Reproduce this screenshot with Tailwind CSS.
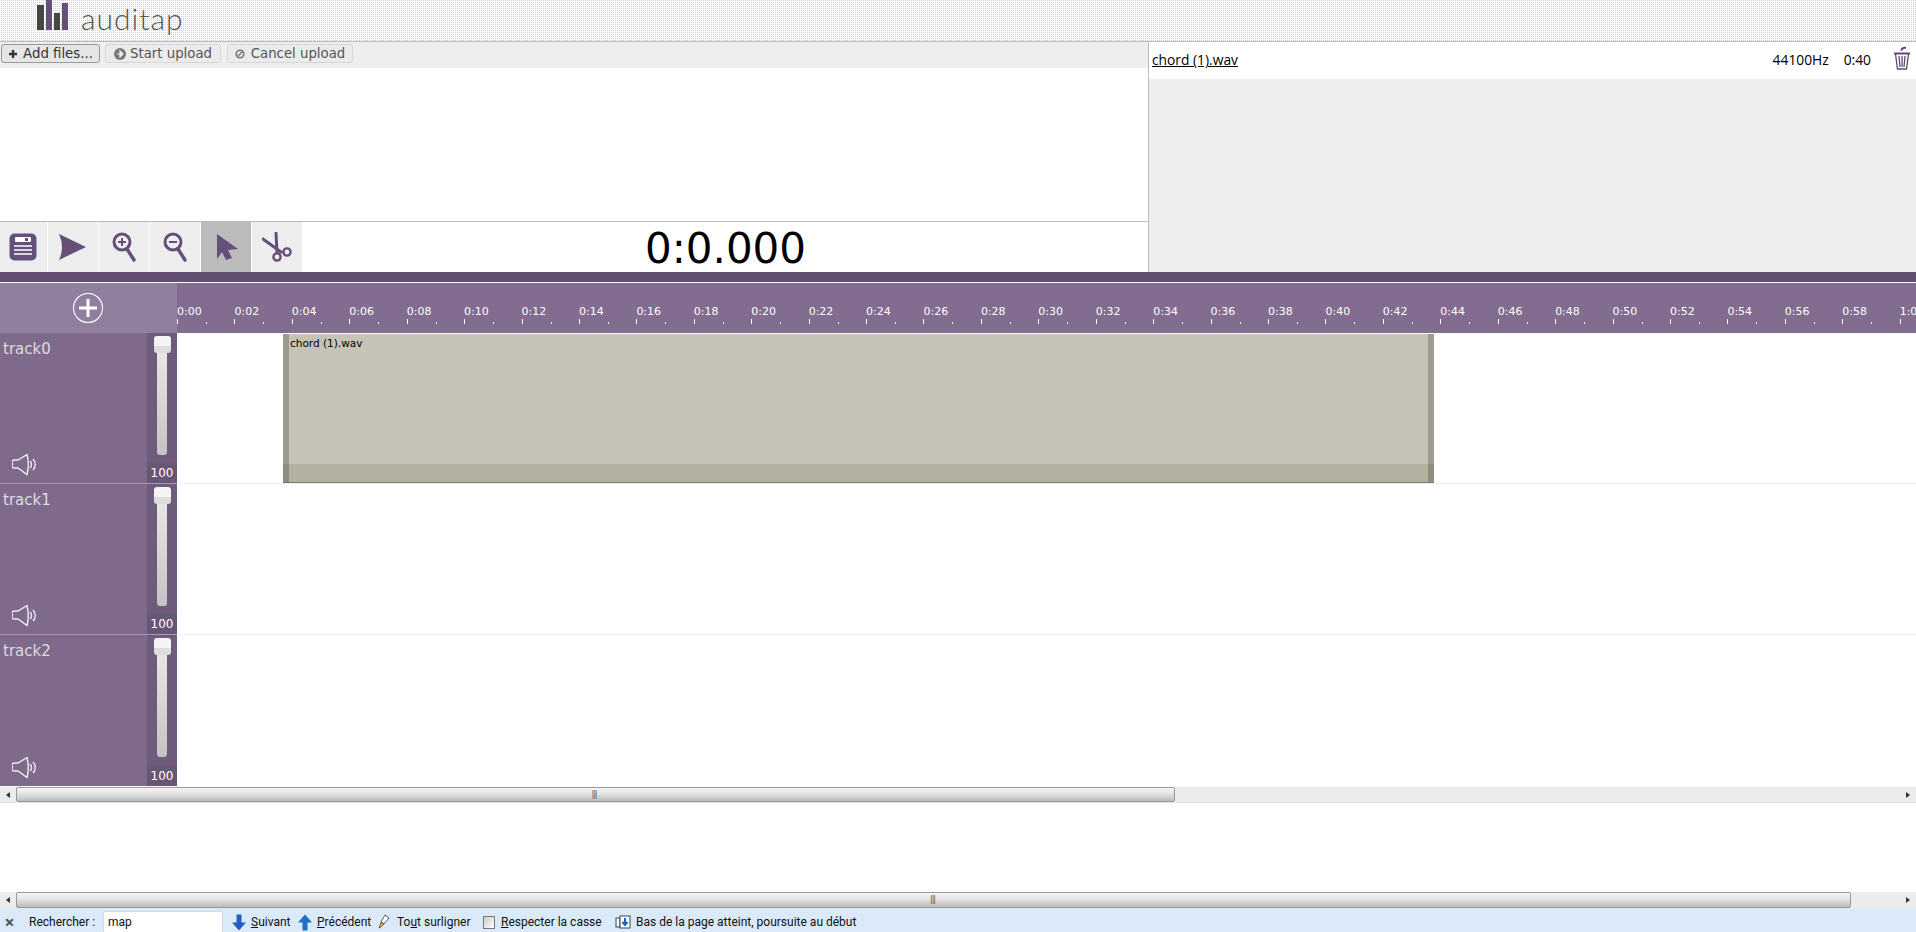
<!DOCTYPE html>
<html><head><meta charset="utf-8"><title>auditap</title>
<script src="https://cdn.jsdelivr.net/npm/@tailwindcss/browser@4"></script></head>
<body class="m-0 overflow-hidden bg-white">
<div class="w-[1916px] h-[932px] flex flex-col overflow-hidden font-['DejaVu_Sans',sans-serif]">
 <header class="h-[42px] shrink-0 border-b border-[#bbb] flex items-start pl-[37px] bg-[conic-gradient(#cfcfcf_25%,#fff_0)] bg-[size:2px_2px] overflow-hidden">
  <svg width="32" height="31" viewBox="0 0 32 31" class="shrink-0"><rect x="0" y="5" width="7" height="25" fill="#464646"/><rect x="9" y="0" width="6" height="30" fill="#664f78"/><rect x="17" y="13" width="6" height="17" fill="#464646"/><rect x="25" y="3" width="6" height="27" fill="#664f78"/></svg>
  <span class="ml-[12px] mt-[-3px] text-[30px] leading-[42px] font-light tracking-[1px] text-[#555] font-['Lato',sans-serif]">auditap</span>
 </header>
 <div class="h-[230px] shrink-0 flex">
  <div class="w-[1149px] shrink-0 flex flex-col border-r border-[#bbb]">
   <div class="h-[26px] bg-[#eee] flex items-start pt-[2px] pl-[1px] text-[13.300px] shrink-0">
    <button class="w-[99px] h-[19px] pt-[1px] flex items-center justify-center gap-[5px] rounded-[3px] border border-[#999] bg-[#e6e6e6] text-[#333] leading-none"><svg width="10" height="10" viewBox="0 0 10 10"><path d="M5 1v8M1 5h8" stroke="#333" stroke-width="2.400"/></svg>Add files...</button>
    <button class="ml-[5px] w-[116px] h-[19px] pt-[1px] flex items-center justify-center gap-[4px] rounded-[3px] border border-[#d6d6d6] bg-[#ebebeb] text-[#555] leading-none"><svg width="12" height="12" viewBox="0 0 12 12"><circle cx="6" cy="6" r="6" fill="#777"/><path d="M3 6h3M6 3l3 3-3 3z" stroke="#eee" fill="#eee" stroke-width="1.200"/></svg>Start upload</button>
    <button class="ml-[6px] w-[126px] h-[19px] pt-[1px] flex items-center justify-center gap-[6px] rounded-[3px] border border-[#d6d6d6] bg-[#ebebeb] text-[#555] leading-none"><svg width="10" height="10" viewBox="0 0 10 10"><circle cx="5" cy="5" r="3.800" fill="none" stroke="#777" stroke-width="1.600"/><path d="M2.500 7.500l5-5" stroke="#777" stroke-width="1.400"/></svg>Cancel upload</button>
   </div>
   <div class="h-[154px] bg-white border-b border-[#bbb] shrink-0"></div>
   <div class="flex-1 flex items-stretch gap-px">
    <div class="w-[47px] bg-[#eee] flex items-center justify-center pr-[1px]"><svg width="28" height="28" viewBox="0 0 28 28"><rect width="27" height="27" x="0.500" y="0.500" rx="5" fill="#664f78"/><rect x="6" y="4" width="16" height="5" rx="1" fill="#fff"/><rect x="16" y="5" width="3" height="3" fill="#664f78"/><path d="M5 13h18M5 17h18M5 21h18" stroke="#fff" stroke-width="1.600"/></svg></div>
    <div class="w-[50px] bg-[#eee] flex items-center justify-center"><svg width="28" height="26" viewBox="0 0 28 26"><path d="M0 0L27 13L0 26Q6 13 0 0Z" fill="#664f78"/></svg></div>
    <div class="w-[50px] bg-[#eee] flex items-center justify-center"><svg width="24" height="30" viewBox="0 0 24 30"><circle cx="10" cy="10" r="8" fill="none" stroke="#664f78" stroke-width="3"/><path d="M6 10h8M10 6v8" stroke="#664f78" stroke-width="2"/><path d="M15 17l7 11" stroke="#664f78" stroke-width="3.400" stroke-linecap="round"/></svg></div>
    <div class="w-[50px] bg-[#eee] flex items-center justify-center"><svg width="24" height="30" viewBox="0 0 24 30"><circle cx="10" cy="10" r="8" fill="none" stroke="#664f78" stroke-width="3"/><path d="M6 10h8" stroke="#664f78" stroke-width="2"/><path d="M15 17l7 11" stroke="#664f78" stroke-width="3.400" stroke-linecap="round"/></svg></div>
    <div class="w-[50px] bg-[#bbb] flex items-center justify-center"><svg width="24" height="28" viewBox="0 0 24 28"><path d="M3 1L24 16L14 17L18 25L12 27L8 19L3 26Z" fill="#664f78"/></svg></div>
    <div class="w-[50px] bg-[#eee] flex items-center justify-center"><svg width="30" height="30" viewBox="0 0 30 30"><g fill="none" stroke="#664f78" stroke-linecap="round"><path d="M1 7L19 20M14 1L15 21" stroke-width="3"/><circle cx="15" cy="25" r="3.600" stroke-width="2.400"/><circle cx="25" cy="20" r="3.600" stroke-width="2.400"/></g></svg></div>
    <div class="flex-1 flex items-center justify-center text-[42px] leading-none text-black pt-[4px] bg-white">0:0.000</div>
   </div>
  </div>
  <div class="flex-1 bg-[#eee]">
   <div class="h-[37px] bg-white flex items-center pl-[3px] pr-[5px] text-[13.800px] text-black font-['Open_Sans',sans-serif]">
    <a class="underline">chord (1).wav</a>
    <span class="ml-auto">44100Hz</span><span class="ml-[15px]">0:40</span>
    <svg class="ml-[22px] -mt-[6px]" width="18" height="24" viewBox="0 0 18 24"><g fill="none" stroke="#5f4b70"><path d="M1 7.500h16" stroke-width="2"/><path d="M2.500 8l2 15h9l2-15M6 10l1 11M9 10v11M12 10l-1 11" stroke-width="1.300"/><path d="M8 4.500c1-2 3-3 5-2.500" stroke-width="2"/></g></svg>
   </div>
  </div>
 </div>
 <div class="h-[10px] bg-[#644e74] shrink-0"></div>
 <div class="h-px bg-white shrink-0"></div>
 <div class="h-[50px] shrink-0 flex bg-[#826c8f] overflow-hidden">
  <div class="w-[177px] shrink-0 bg-[#907f9f] flex items-center justify-center pr-[2px]"><svg width="32" height="32" viewBox="0 0 32 32"><circle cx="16" cy="16" r="14.500" fill="none" stroke="#fff" stroke-width="1.100"/><path d="M16 7v18M7 16h18" stroke="#fff" stroke-width="3"/></svg></div>
  <div class="flex text-[11px] leading-none text-white">
   <div class="w-[57.430px] shrink-0 pt-[23px]">0:00<div class="flex items-end h-[6px] mt-[1px]"><i class="block w-px h-[5px] bg-white"></i><i class="block w-px h-[2px] ml-[28px] bg-white"></i></div></div>
   <div class="w-[57.430px] shrink-0 pt-[23px]">0:02<div class="flex items-end h-[6px] mt-[1px]"><i class="block w-px h-[5px] bg-white"></i><i class="block w-px h-[2px] ml-[28px] bg-white"></i></div></div>
   <div class="w-[57.430px] shrink-0 pt-[23px]">0:04<div class="flex items-end h-[6px] mt-[1px]"><i class="block w-px h-[5px] bg-white"></i><i class="block w-px h-[2px] ml-[28px] bg-white"></i></div></div>
   <div class="w-[57.430px] shrink-0 pt-[23px]">0:06<div class="flex items-end h-[6px] mt-[1px]"><i class="block w-px h-[5px] bg-white"></i><i class="block w-px h-[2px] ml-[28px] bg-white"></i></div></div>
   <div class="w-[57.430px] shrink-0 pt-[23px]">0:08<div class="flex items-end h-[6px] mt-[1px]"><i class="block w-px h-[5px] bg-white"></i><i class="block w-px h-[2px] ml-[28px] bg-white"></i></div></div>
   <div class="w-[57.430px] shrink-0 pt-[23px]">0:10<div class="flex items-end h-[6px] mt-[1px]"><i class="block w-px h-[5px] bg-white"></i><i class="block w-px h-[2px] ml-[28px] bg-white"></i></div></div>
   <div class="w-[57.430px] shrink-0 pt-[23px]">0:12<div class="flex items-end h-[6px] mt-[1px]"><i class="block w-px h-[5px] bg-white"></i><i class="block w-px h-[2px] ml-[28px] bg-white"></i></div></div>
   <div class="w-[57.430px] shrink-0 pt-[23px]">0:14<div class="flex items-end h-[6px] mt-[1px]"><i class="block w-px h-[5px] bg-white"></i><i class="block w-px h-[2px] ml-[28px] bg-white"></i></div></div>
   <div class="w-[57.430px] shrink-0 pt-[23px]">0:16<div class="flex items-end h-[6px] mt-[1px]"><i class="block w-px h-[5px] bg-white"></i><i class="block w-px h-[2px] ml-[28px] bg-white"></i></div></div>
   <div class="w-[57.430px] shrink-0 pt-[23px]">0:18<div class="flex items-end h-[6px] mt-[1px]"><i class="block w-px h-[5px] bg-white"></i><i class="block w-px h-[2px] ml-[28px] bg-white"></i></div></div>
   <div class="w-[57.430px] shrink-0 pt-[23px]">0:20<div class="flex items-end h-[6px] mt-[1px]"><i class="block w-px h-[5px] bg-white"></i><i class="block w-px h-[2px] ml-[28px] bg-white"></i></div></div>
   <div class="w-[57.430px] shrink-0 pt-[23px]">0:22<div class="flex items-end h-[6px] mt-[1px]"><i class="block w-px h-[5px] bg-white"></i><i class="block w-px h-[2px] ml-[28px] bg-white"></i></div></div>
   <div class="w-[57.430px] shrink-0 pt-[23px]">0:24<div class="flex items-end h-[6px] mt-[1px]"><i class="block w-px h-[5px] bg-white"></i><i class="block w-px h-[2px] ml-[28px] bg-white"></i></div></div>
   <div class="w-[57.430px] shrink-0 pt-[23px]">0:26<div class="flex items-end h-[6px] mt-[1px]"><i class="block w-px h-[5px] bg-white"></i><i class="block w-px h-[2px] ml-[28px] bg-white"></i></div></div>
   <div class="w-[57.430px] shrink-0 pt-[23px]">0:28<div class="flex items-end h-[6px] mt-[1px]"><i class="block w-px h-[5px] bg-white"></i><i class="block w-px h-[2px] ml-[28px] bg-white"></i></div></div>
   <div class="w-[57.430px] shrink-0 pt-[23px]">0:30<div class="flex items-end h-[6px] mt-[1px]"><i class="block w-px h-[5px] bg-white"></i><i class="block w-px h-[2px] ml-[28px] bg-white"></i></div></div>
   <div class="w-[57.430px] shrink-0 pt-[23px]">0:32<div class="flex items-end h-[6px] mt-[1px]"><i class="block w-px h-[5px] bg-white"></i><i class="block w-px h-[2px] ml-[28px] bg-white"></i></div></div>
   <div class="w-[57.430px] shrink-0 pt-[23px]">0:34<div class="flex items-end h-[6px] mt-[1px]"><i class="block w-px h-[5px] bg-white"></i><i class="block w-px h-[2px] ml-[28px] bg-white"></i></div></div>
   <div class="w-[57.430px] shrink-0 pt-[23px]">0:36<div class="flex items-end h-[6px] mt-[1px]"><i class="block w-px h-[5px] bg-white"></i><i class="block w-px h-[2px] ml-[28px] bg-white"></i></div></div>
   <div class="w-[57.430px] shrink-0 pt-[23px]">0:38<div class="flex items-end h-[6px] mt-[1px]"><i class="block w-px h-[5px] bg-white"></i><i class="block w-px h-[2px] ml-[28px] bg-white"></i></div></div>
   <div class="w-[57.430px] shrink-0 pt-[23px]">0:40<div class="flex items-end h-[6px] mt-[1px]"><i class="block w-px h-[5px] bg-white"></i><i class="block w-px h-[2px] ml-[28px] bg-white"></i></div></div>
   <div class="w-[57.430px] shrink-0 pt-[23px]">0:42<div class="flex items-end h-[6px] mt-[1px]"><i class="block w-px h-[5px] bg-white"></i><i class="block w-px h-[2px] ml-[28px] bg-white"></i></div></div>
   <div class="w-[57.430px] shrink-0 pt-[23px]">0:44<div class="flex items-end h-[6px] mt-[1px]"><i class="block w-px h-[5px] bg-white"></i><i class="block w-px h-[2px] ml-[28px] bg-white"></i></div></div>
   <div class="w-[57.430px] shrink-0 pt-[23px]">0:46<div class="flex items-end h-[6px] mt-[1px]"><i class="block w-px h-[5px] bg-white"></i><i class="block w-px h-[2px] ml-[28px] bg-white"></i></div></div>
   <div class="w-[57.430px] shrink-0 pt-[23px]">0:48<div class="flex items-end h-[6px] mt-[1px]"><i class="block w-px h-[5px] bg-white"></i><i class="block w-px h-[2px] ml-[28px] bg-white"></i></div></div>
   <div class="w-[57.430px] shrink-0 pt-[23px]">0:50<div class="flex items-end h-[6px] mt-[1px]"><i class="block w-px h-[5px] bg-white"></i><i class="block w-px h-[2px] ml-[28px] bg-white"></i></div></div>
   <div class="w-[57.430px] shrink-0 pt-[23px]">0:52<div class="flex items-end h-[6px] mt-[1px]"><i class="block w-px h-[5px] bg-white"></i><i class="block w-px h-[2px] ml-[28px] bg-white"></i></div></div>
   <div class="w-[57.430px] shrink-0 pt-[23px]">0:54<div class="flex items-end h-[6px] mt-[1px]"><i class="block w-px h-[5px] bg-white"></i><i class="block w-px h-[2px] ml-[28px] bg-white"></i></div></div>
   <div class="w-[57.430px] shrink-0 pt-[23px]">0:56<div class="flex items-end h-[6px] mt-[1px]"><i class="block w-px h-[5px] bg-white"></i><i class="block w-px h-[2px] ml-[28px] bg-white"></i></div></div>
   <div class="w-[57.430px] shrink-0 pt-[23px]">0:58<div class="flex items-end h-[6px] mt-[1px]"><i class="block w-px h-[5px] bg-white"></i><i class="block w-px h-[2px] ml-[28px] bg-white"></i></div></div>
   <div class="w-[57.430px] shrink-0 pt-[23px]">1:00<div class="flex items-end h-[6px] mt-[1px]"><i class="block w-px h-[5px] bg-white"></i><i class="block w-px h-[2px] ml-[28px] bg-white"></i></div></div>
  </div>
 </div>

 <div class="h-[151px] shrink-0 flex">
  <div class="w-[177px] shrink-0 flex border-b border-[#a898b3] bg-[#7f6a8c]">
   <div class="w-[147px] flex flex-col justify-between pl-[3px] pt-[5px] pb-[7px] text-[15px] leading-[22px] text-[#ddd]">track0
    <svg class="ml-[9px]" width="27" height="23" viewBox="0 0 27 23"><g fill="none" stroke="#eee" stroke-width="1.400"><path d="M6 7H3a2.500 2.500 0 0 0-2.500 4A2.500 2.500 0 0 0 3 15h3l9 6.500c1.500-6 1.500-14 0-20z"/><path d="M18 8c2 2 2 5 0 7M21 6c3 3 3 8 0 11"/></g></svg>
   </div>
   <div class="w-[30px] bg-[#6f5c7c] flex flex-col items-center relative">
    <div class="absolute top-[3px] left-[7px] w-[17px] h-[17px] rounded-[3px] bg-[linear-gradient(#f4f4f4_60%,#ddd_60%)]"></div>
    <div class="mt-[14px] w-[10px] h-[108px] rounded-[3px] bg-[linear-gradient(#e8e8e8,#c4c4c4)]"></div>
    <div class="mt-auto w-full h-[20px] bg-[#695675] text-center text-[12px] leading-[20px] text-white">100</div>
   </div>
  </div>
  <div class="flex-1 border-b border-[#eee] pl-[106px]">
   <div class="mt-px w-[1151px] h-[149px] flex flex-col border-b border-[#777] bg-[#c5c2b6] relative overflow-hidden">
    <div class="flex-1 pl-[7px] pt-[3px] text-[10.500px] leading-[12px] text-black">chord (1).wav</div>
    <div class="h-[18px] bg-[#b4b1a1]"></div>
    <div class="absolute inset-y-0 left-0 w-[6px] bg-black/20"></div>
    <div class="absolute inset-y-0 right-0 w-[6px] bg-black/20"></div>
   </div>
  </div>
 </div>

 <div class="h-[151px] shrink-0 flex">
  <div class="w-[177px] shrink-0 flex border-b border-[#a898b3] bg-[#7f6a8c]">
   <div class="w-[147px] flex flex-col justify-between pl-[3px] pt-[5px] pb-[7px] text-[15px] leading-[22px] text-[#ddd]">track1
    <svg class="ml-[9px]" width="27" height="23" viewBox="0 0 27 23"><g fill="none" stroke="#eee" stroke-width="1.400"><path d="M6 7H3a2.500 2.500 0 0 0-2.500 4A2.500 2.500 0 0 0 3 15h3l9 6.500c1.500-6 1.500-14 0-20z"/><path d="M18 8c2 2 2 5 0 7M21 6c3 3 3 8 0 11"/></g></svg>
   </div>
   <div class="w-[30px] bg-[#6f5c7c] flex flex-col items-center relative">
    <div class="absolute top-[3px] left-[7px] w-[17px] h-[17px] rounded-[3px] bg-[linear-gradient(#f4f4f4_60%,#ddd_60%)]"></div>
    <div class="mt-[14px] w-[10px] h-[108px] rounded-[3px] bg-[linear-gradient(#e8e8e8,#c4c4c4)]"></div>
    <div class="mt-auto w-full h-[20px] bg-[#695675] text-center text-[12px] leading-[20px] text-white">100</div>
   </div>
  </div>
  <div class="flex-1 border-b border-[#eee]"></div>
 </div>

 <div class="h-[151px] shrink-0 flex">
  <div class="w-[177px] shrink-0 flex bg-[#7f6a8c]">
   <div class="w-[147px] flex flex-col justify-between pl-[3px] pt-[5px] pb-[7px] text-[15px] leading-[22px] text-[#ddd]">track2
    <svg class="ml-[9px]" width="27" height="23" viewBox="0 0 27 23"><g fill="none" stroke="#eee" stroke-width="1.400"><path d="M6 7H3a2.500 2.500 0 0 0-2.500 4A2.500 2.500 0 0 0 3 15h3l9 6.500c1.500-6 1.500-14 0-20z"/><path d="M18 8c2 2 2 5 0 7M21 6c3 3 3 8 0 11"/></g></svg>
   </div>
   <div class="w-[30px] bg-[#6f5c7c] flex flex-col items-center relative">
    <div class="absolute top-[3px] left-[7px] w-[17px] h-[17px] rounded-[3px] bg-[linear-gradient(#f4f4f4_60%,#ddd_60%)]"></div>
    <div class="mt-[14px] w-[10px] h-[108px] rounded-[3px] bg-[linear-gradient(#e8e8e8,#c4c4c4)]"></div>
    <div class="mt-auto w-full h-[20px] bg-[#695675] text-center text-[12px] leading-[20px] text-white">100</div>
   </div>
  </div>
  <div class="flex-1"></div>
 </div>

 <div class="h-[16px] mt-px shrink-0 flex bg-[#ececec] border-b border-[#e4e4e4]">
  <div class="w-[16px] flex items-center justify-center"><i class="block border-y-[3px] border-r-[4px] border-y-transparent border-r-[#333]"></i></div>
  <div class="w-[1159px] flex items-center justify-center pr-[3px] border border-[#999] rounded-[2px] bg-[linear-gradient(#f6f6f6,#e2e2e2_45%,#bdbdbd)]"><span class="text-[8px] leading-none text-[#555] tracking-[-1px]">|||</span></div>
  <div class="ml-auto w-[16px] flex items-center justify-center"><i class="block border-y-[3px] border-l-[4px] border-y-transparent border-l-[#333]"></i></div>
 </div>
 <div class="h-[89px] shrink-0 bg-white"></div>
 <div class="h-[16px] shrink-0 flex bg-[#ececec]">
  <div class="w-[16px] flex items-center justify-center"><i class="block border-y-[3px] border-r-[4px] border-y-transparent border-r-[#333]"></i></div>
  <div class="w-[1835px] flex items-center justify-center pr-[2px] border border-[#999] rounded-[2px] bg-[linear-gradient(#f6f6f6,#e2e2e2_45%,#bdbdbd)]"><span class="text-[8px] leading-none text-[#555] tracking-[-1px]">|||</span></div>
  <div class="ml-auto w-[16px] flex items-center justify-center"><i class="block border-y-[3px] border-l-[4px] border-y-transparent border-l-[#333]"></i></div>
 </div>
 <footer class="flex-1 bg-[#daeaf9] flex items-center pt-[3px] text-[12px] leading-none text-[#111] font-['Roboto',sans-serif] whitespace-nowrap">
  <span class="ml-[5px] w-[24px] text-[17px] text-[#555] font-bold">×</span>
  <span class="w-[74px]">Rechercher :</span>
  <div class="w-[120px] h-[22px] bg-white rounded-[2px] border border-[#cfdbe6] flex items-center pl-[4px]">map</div>
  <svg class="ml-[9px]" width="14" height="17" viewBox="0 0 14 16"><path d="M4.500 0h5v8H14L7 16 0 8h4.500z" fill="#1f5fc4"/></svg>
  <span class="ml-[5px] w-[47px]"><u>S</u>uivant</span>
  <svg width="14" height="17" viewBox="0 0 14 16"><path d="M4.500 16h5V8H14L7 0 0 8h4.500z" fill="#1f70c4"/></svg>
  <span class="ml-[5px] w-[61px]"><u>P</u>récédent</span>
  <svg width="12" height="16" viewBox="0 0 12 16"><path d="M7 1l4 3-5 6-3-2z" fill="#fff" stroke="#555"/><path d="M3 8l3 2-3 3-2 1z" fill="#d9a441" stroke="#333" stroke-width="0.600"/></svg>
  <span class="ml-[7px] w-[86px]">To<u>u</u>t surligner</span>
  <div class="w-[12px] h-[13px] border border-[#777] bg-[linear-gradient(135deg,#ccc,#fff)]"></div>
  <span class="ml-[6px] w-[114px]"><u>R</u>especter la casse</span>
  <svg width="16" height="14" viewBox="0 0 16 14"><rect x="1" y="3" width="4" height="9" fill="#fff" stroke="#345"/><rect x="5" y="1" width="10" height="12" fill="#fff" stroke="#345"/><path d="M10 3v6M7.500 7l2.500 3 2.500-3" fill="none" stroke="#1f5fc4" stroke-width="2"/></svg>
  <span class="ml-[5px]">Bas de la page atteint, poursuite au début</span>
 </footer>
</div>
</body></html>
